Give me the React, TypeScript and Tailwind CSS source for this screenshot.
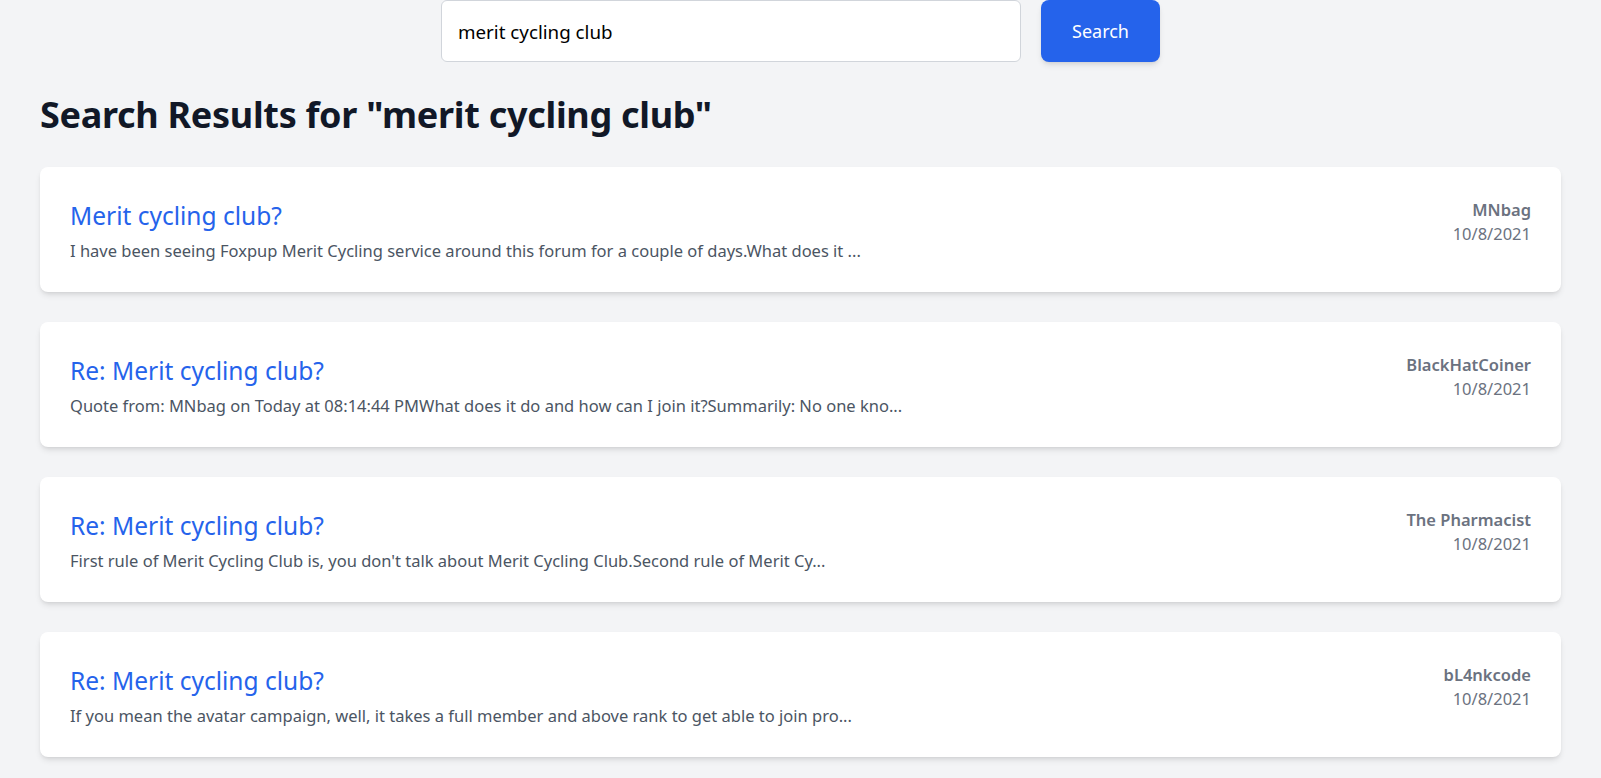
import { useState } from "react";

type Result = {
  title: string;
  excerpt: string;
  author: string;
  date: string;
};

const results: Result[] = [
  {
    title: "Merit cycling club?",
    excerpt:
      "I have been seeing Foxpup Merit Cycling service around this forum for a couple of days.What does it ...",
    author: "MNbag",
    date: "10/8/2021",
  },
  {
    title: "Re: Merit cycling club?",
    excerpt:
      "Quote from: MNbag on Today at 08:14:44 PMWhat does it do and how can I join it?Summarily: No one kno...",
    author: "BlackHatCoiner",
    date: "10/8/2021",
  },
  {
    title: "Re: Merit cycling club?",
    excerpt:
      "First rule of Merit Cycling Club is, you don't talk about Merit Cycling Club.Second rule of Merit Cy...",
    author: "The Pharmacist",
    date: "10/8/2021",
  },
  {
    title: "Re: Merit cycling club?",
    excerpt:
      "If you mean the avatar campaign, well, it takes a full member and above rank to get able to join pro...",
    author: "bL4nkcode",
    date: "10/8/2021",
  },
];

const ResultCard = ({ result }: { result: Result }) => {
  return (
    <div className="flex items-start justify-between rounded-lg bg-white px-[30px] pt-[32px] pb-[29px] shadow-md">
      <div className="min-w-0">
        <a href="#" className="block pt-[2px] text-[24.5px] leading-[30px] text-[#2563eb]">
          {result.title}
        </a>
        <p className="mt-2 text-[16.5px] leading-6 text-[#4b5563]">{result.excerpt}</p>
      </div>
      <div className="shrink-0 text-right">
        <p className="-mt-[1px] text-[16.5px] font-semibold leading-6 text-[#6b7280]">{result.author}</p>
        <p className="text-[16.5px] leading-6 text-[#6b7280]">{result.date}</p>
      </div>
    </div>
  );
};

export default function App() {
  const [query, setQuery] = useState("merit cycling club");

  return (
    <div
      className="min-h-screen bg-[#f3f4f6] px-10"
      style={{ fontFamily: '"Noto Sans", "Open Sans", sans-serif' }}
    >
      <div className="flex justify-center gap-5">
        <input
          value={query}
          onChange={(e) => setQuery(e.target.value)}
          className="h-[62px] w-[580px] rounded-md border border-[#d1d5db] bg-white px-4 text-[18.75px] text-black outline-none"
        />
        <button className="h-[62px] w-[119px] rounded-lg bg-[#2563eb] text-lg text-white shadow-md">
          Search
        </button>
      </div>

      <h1 className="mt-[33px] text-4xl font-bold leading-10 tracking-[-0.3px] text-[#111827]">
        Search Results for "merit cycling club"
      </h1>

      <div className="mt-8 flex flex-col gap-[30px]">
        {results.map((r, i) => (
          <ResultCard key={i} result={r} />
        ))}
      </div>
    </div>
  );
}
